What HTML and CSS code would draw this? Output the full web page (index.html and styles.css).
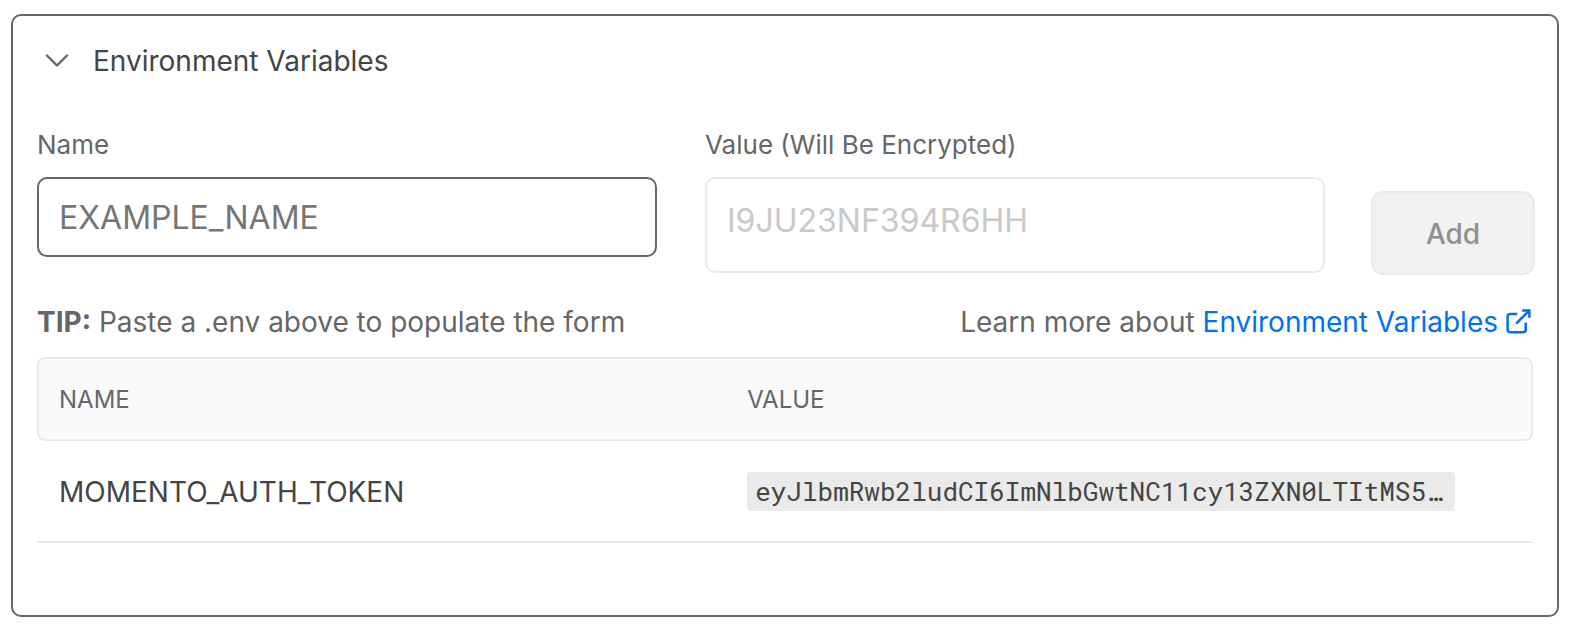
FILE: index.html
```html
<!DOCTYPE html>
<html lang="en">
<head>
<meta charset="utf-8">
<meta name="viewport" content="width=device-width, initial-scale=1">
<title>Environment Variables</title>
<link rel="stylesheet" href="styles.css">
</head>
<body>
<section class="card">
  <button class="card-toggle" type="button" aria-expanded="true">
    <svg class="chevron" viewBox="0 0 24 24" aria-hidden="true"><path d="M2 5.5l10 10 10-10"/></svg>
    Environment Variables
  </button>

  <form class="env-form">
    <div class="fields">
      <div class="field">
        <label class="label" for="env-name">Name</label>
        <input class="control control-name" id="env-name" type="text" placeholder="EXAMPLE_NAME">
      </div>
      <div class="field">
        <label class="label" for="env-value">Value (Will Be Encrypted)</label>
        <textarea class="control control-value" id="env-value" rows="1" placeholder="I9JU23NF394R6HH"></textarea>
      </div>
    </div>
    <button class="add" type="submit" disabled>Add</button>
  </form>

  <div class="hints">
    <p class="hint"><strong>TIP:</strong> Paste a .env above to populate the form</p>
    <p class="hint">Learn more about <a class="link" href="#">Environment Variables<svg class="external" viewBox="0 0 24 24" aria-hidden="true"><path d="M18 12v6a2 2 0 01-2 2H5a2 2 0 01-2-2V7a2 2 0 012-2h6"/><path d="M15 2h6v6"/><path d="M10 13L21 2"/></svg></a></p>
  </div>

  <table class="env-table">
    <thead>
      <tr><th class="col-name" scope="col">NAME</th><th scope="col">VALUE</th></tr>
    </thead>
    <tbody>
      <tr><td>MOMENTO_AUTH_TOKEN</td><td><code class="token">eyJlbmRwb2ludCI6ImNlbGwtNC11cy13ZXN0LTItMS5…</code></td></tr>
    </tbody>
  </table>
</section>
</body>
</html>
```

FILE: styles.css
```css
* {
  box-sizing: border-box;
}

body {
  margin: 0;
  padding: 14px 11px;
  background: #fff;
  color: #444;
  font-family: Inter, "Liberation Sans", sans-serif;
  font-size: 28px;
}

.card {
  padding: 24px 24px 72px;
  border: 2px solid #666;
  border-radius: 10px;
}

.card-toggle {
  display: flex;
  align-items: center;
  gap: 24px;
  margin: 0 0 46px;
  padding: 0 8px;
  border: 0;
  background: none;
  color: #444;
  font: inherit;
  line-height: 43px;
}

.chevron {
  width: 24px;
  height: 24px;
  fill: none;
  stroke: #666;
  stroke-width: 2.4;
  stroke-linecap: round;
  stroke-linejoin: round;
}

.env-form {
  display: flex;
  align-items: flex-start;
  gap: 46px;
  margin-right: -2px;
}

.fields {
  display: flex;
  flex: 1;
  gap: 48px;
}

.field {
  display: flex;
  flex: 1;
  flex-direction: column;
  gap: 16px;
  min-width: 0;
}

.label {
  color: #666;
  font-size: 26px;
  line-height: 32px;
}

.control {
  width: 100%;
  margin: 0;
  padding: 0 20px;
  border: 2px solid #eaeaea;
  border-radius: 10px;
  outline: 0;
  background: #fff;
  color: #444;
  font-family: inherit;
  font-size: 32px;
  resize: none;
}

.control-name {
  height: 80px;
  border-color: #666;
}

.control-value {
  height: 96px;
  padding-top: 20px;
  line-height: 44px;
}

.control-name::placeholder {
  color: #757575;
}

.control-value::placeholder {
  color: #c9c9c9;
}

.add {
  width: 164px;
  height: 84px;
  margin-top: 62px;
  padding: 2px 0 0;
  border: 2px solid #eaeaea;
  border-radius: 12px;
  background: #f1f1f1;
  color: #8f8f8f;
  font: inherit;
  font-weight: 500;
}

.hints {
  display: flex;
  justify-content: space-between;
  margin: 28px 0 16px;
  color: #666;
  line-height: 38px;
}

.hint {
  margin: 0;
}

.link {
  display: inline-flex;
  align-items: center;
  gap: 6px;
  color: #0070f3;
  text-decoration: none;
}

.external {
  width: 29px;
  height: 29px;
  fill: none;
  stroke: currentColor;
  stroke-width: 2.1;
}

.env-table {
  width: 100%;
  border-spacing: 0;
  table-layout: fixed;
  text-align: left;
}

.env-table th {
  height: 84px;
  padding: 0 20px;
  border: 2px solid #eaeaea;
  background: #fafafa;
  color: #666;
  font-size: 24px;
  font-weight: 400;
}

.env-table th:first-child {
  border-right: 0;
  border-radius: 8px 0 0 8px;
}

.env-table th:last-child {
  border-left: 0;
  border-radius: 0 8px 8px 0;
}

.env-table td {
  height: 102px;
  padding: 2px 22px 0;
  border-bottom: 2px solid #eaeaea;
}

.env-table th:last-child {
  padding-left: 22px;
}

.env-table td:last-child {
  padding-top: 0;
}

.col-name {
  width: 46%;
}

.token {
  display: block;
  width: fit-content;
  padding: 0 13px 0 8px;
  border-radius: 4px;
  background: #eaeaea;
  font-family: "Roboto Mono", "DejaVu Sans Mono", monospace;
  font-size: 26px;
  line-height: 39px;
}
```
